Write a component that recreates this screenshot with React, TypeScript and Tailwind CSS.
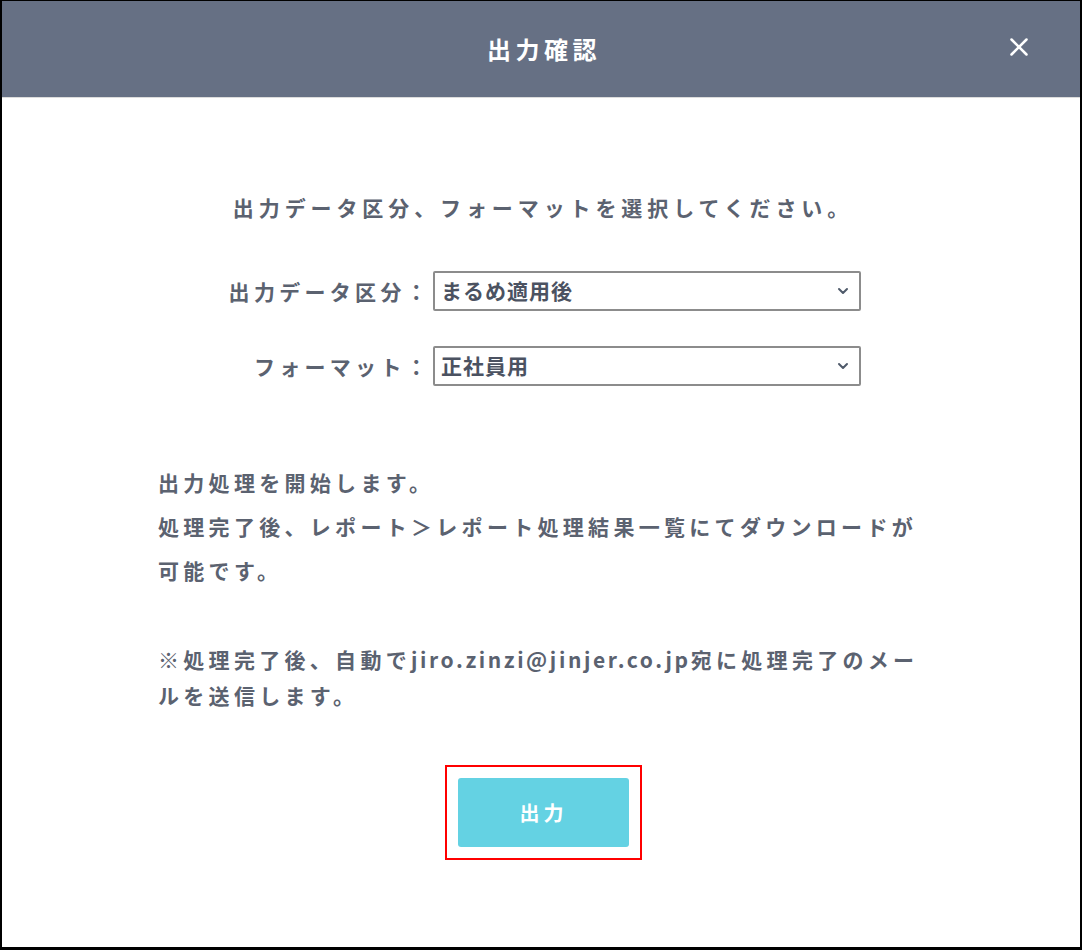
import React from 'react';
import { ChevronDown, X } from 'lucide-react';

const font = { fontFamily: '"Noto Sans CJK JP", "Noto Sans", sans-serif' };

const SelectRow = ({ label, value }: { label: string; value: string }) => (
  <div className="flex items-center justify-center pl-[6px]">
    <div className="w-[206px] pr-[2px] text-right text-[21px] font-bold tracking-[4.3px] text-[#5b6270] leading-[28px] whitespace-nowrap">
      {label}
    </div>
    <div className="relative w-[428px] h-[40px]">
      <select
        defaultValue={value}
        className="w-full h-full appearance-none rounded-[2px] border-2 border-[#8c8c8c] bg-white pl-[6px] text-[21px] font-bold tracking-[1px] text-[#4b5261] outline-none"
        style={font}
      >
        <option>{value}</option>
      </select>
      <ChevronDown className="pointer-events-none absolute right-[10px] top-[12px] h-[16px] w-[16px] text-[#4f5a6a]" strokeWidth={3} />
    </div>
  </div>
);

export default function App() {
  return (
    <div className="w-[1082px] h-[950px] bg-white border-black border-t border-l-2 border-r-2 border-b-[3px] flex flex-col" style={font}>
      <div className="relative h-[97px] shrink-0 bg-[#667084] border-b border-[#dcdcdc] flex items-center justify-center">
        <h1 className="pl-[6px] text-[24px] font-bold tracking-[4.5px] text-white">出力確認</h1>
        <button className="absolute right-[46px] top-[31px] text-white">
          <X className="h-[30px] w-[30px]" strokeWidth={2} />
        </button>
      </div>

      <p className="mt-[95px] pl-[4px] text-center text-[21px] font-bold tracking-[4.9px] leading-[28px] text-[#5b6270]">
        出力データ区分、フォーマットを選択してください。
      </p>

      <div className="mt-[50px] flex flex-col gap-[35px]">
        <SelectRow label="出力データ区分：" value="まるめ適用後" />
        <SelectRow label="フォーマット：" value="正社員用" />
      </div>

      <div className="ml-[156px] mt-[74px] w-[780px] text-[21px] font-bold tracking-[4.3px] text-[#5b6270]">
        <p className="leading-[44px]">出力処理を開始します。</p>
        <p className="leading-[44px]">処理完了後、レポート＞レポート処理結果一覧にてダウンロードが可能です。</p>
        <p className="mt-[49px] leading-[36px] tracking-[4.3px]">
          ※処理完了後、自動で<span className="tracking-[2.6px]">jiro.zinzi@jinjer.co.jp</span>宛に処理完了のメールを送信します。
        </p>
      </div>

      <div className="mt-[52px] flex justify-center pl-[5px]">
        <div className="border-2 border-[#ff0000] px-[11px] py-[11px]">
          <button className="w-[171px] h-[69px] rounded-[3px] bg-[#64d2e3] text-[20px] font-bold tracking-[0.2em] text-white">
            出力
          </button>
        </div>
      </div>
    </div>
  );
}
